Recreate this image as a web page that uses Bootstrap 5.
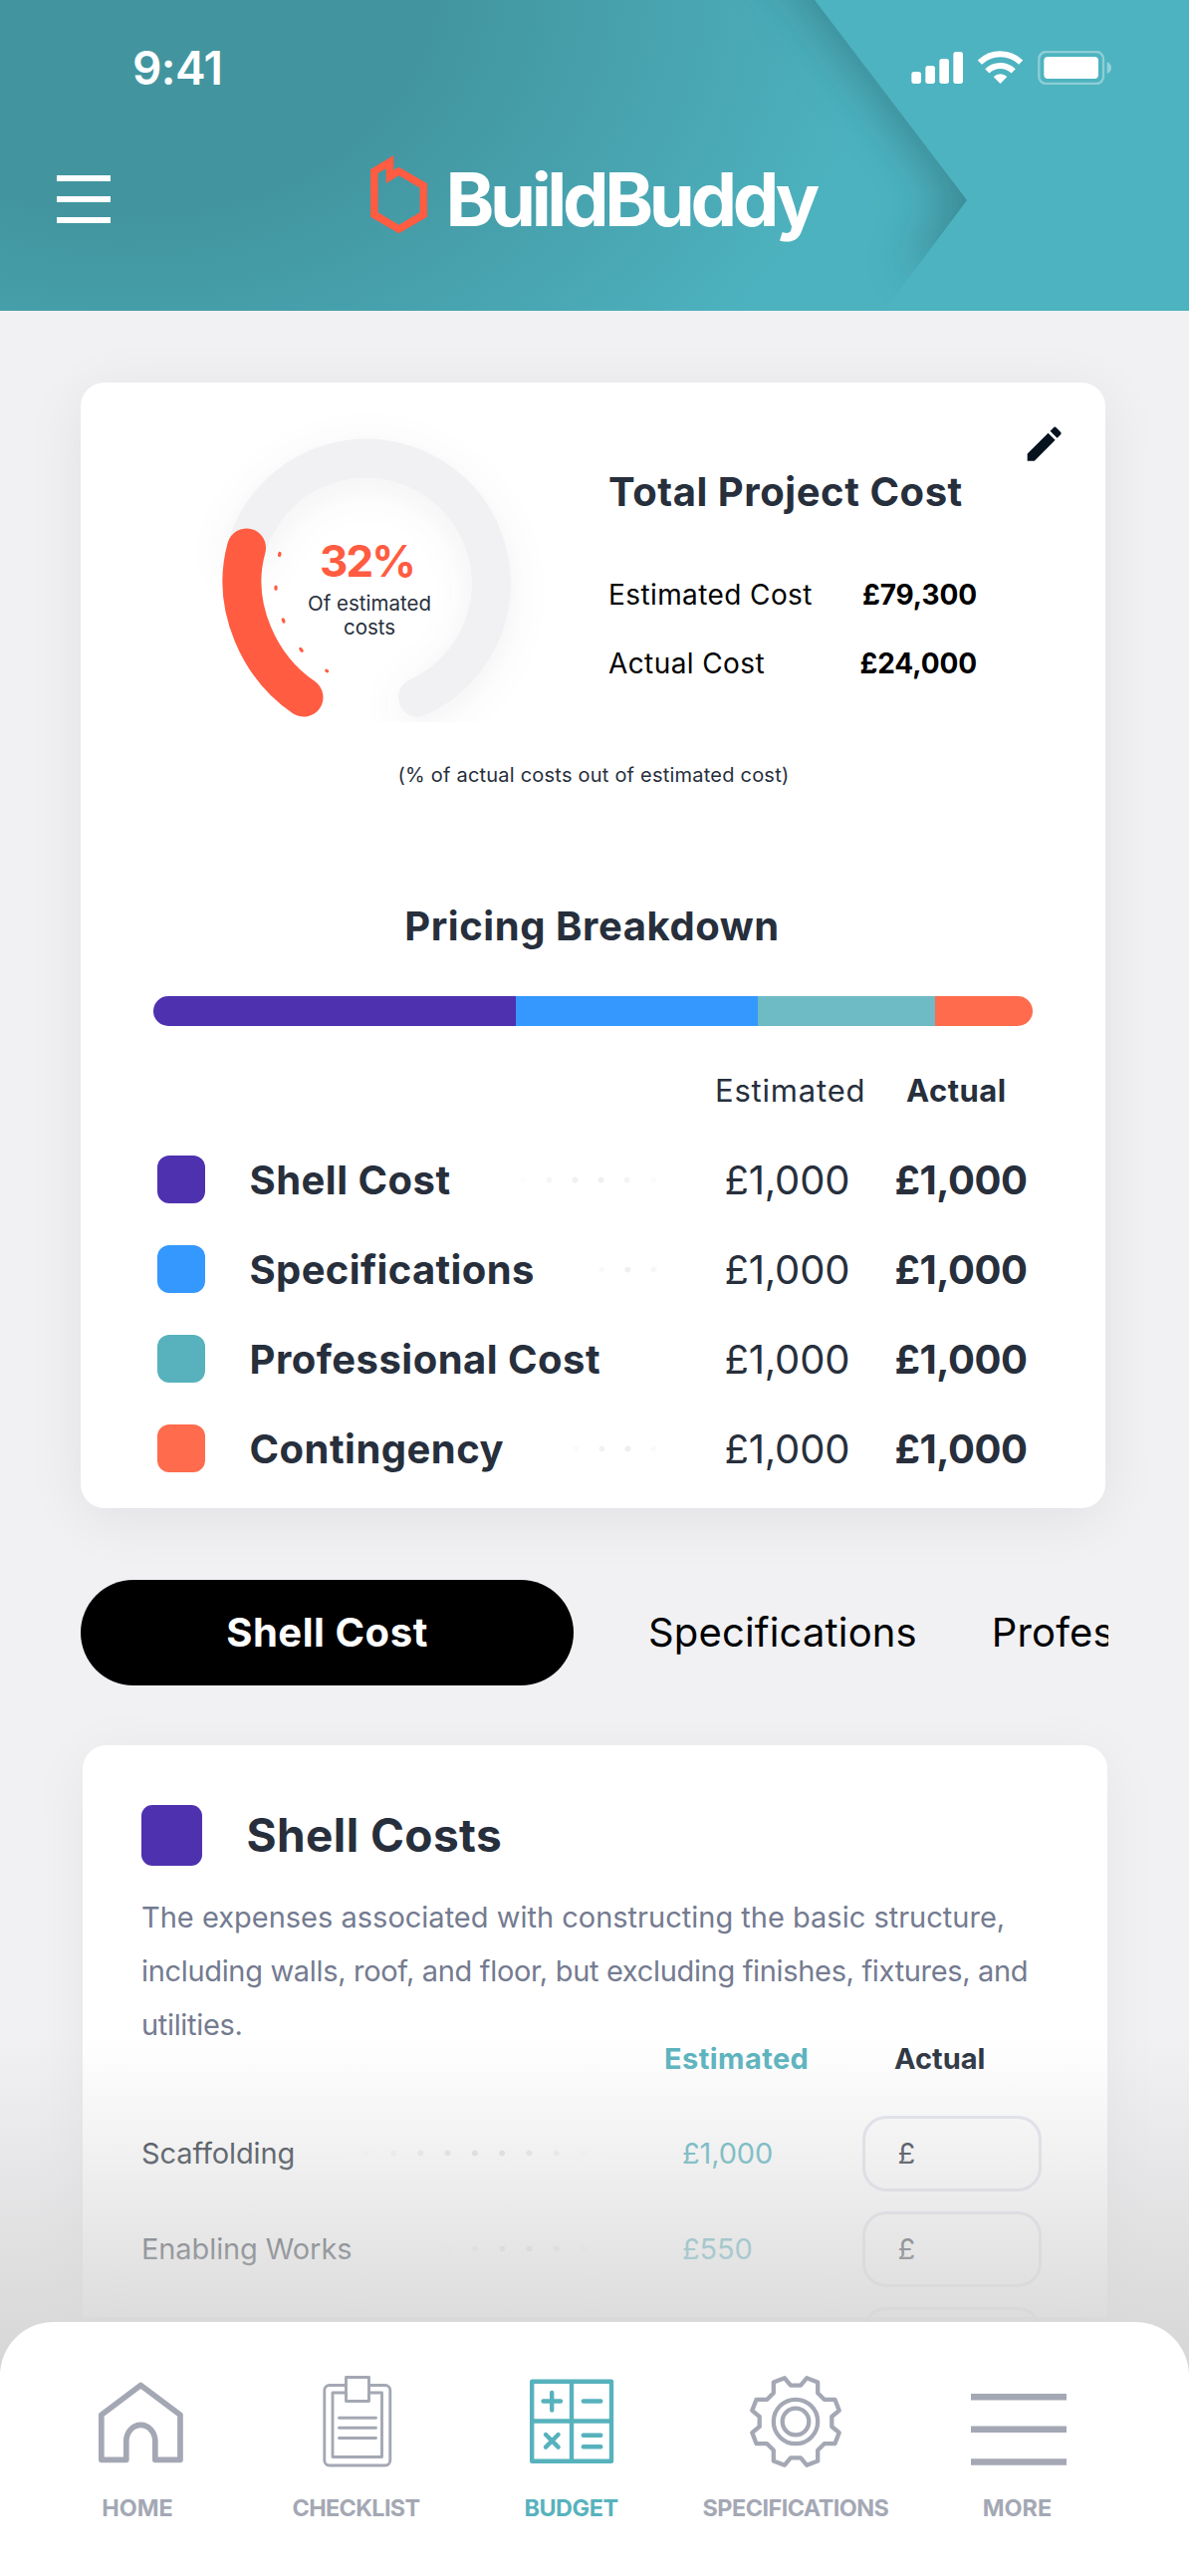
<!DOCTYPE html>
<html lang="en">
<head>
<meta charset="utf-8">
<meta name="viewport" content="width=device-width, initial-scale=1">
<title>BuildBuddy – Budget</title>
<link rel="stylesheet" href="https://cdn.jsdelivr.net/npm/bootstrap@5.3.0/dist/css/bootstrap.min.css">
<style>
  :root { --ink:#272f3c; --teal:#57b2bd; --coral:#ff5c41; --muted:#a4a8b4; }
  body { background:#f1f1f4; font-family:Inter, "Liberation Sans", sans-serif; color:var(--ink); }
  .app { width:1194px; height:2586px; }
  svg { display:block; flex:none; }

  /* header */
  .app-header { height:312px; }
  .header-art { top:0; left:0; z-index:0; }
  .status-bar { height:136px; padding:0 78px 0 133px; }
  .clock { font-size:46px; font-weight:600; letter-spacing:-.6px; line-height:50px; }
  .brand-row { height:128px; padding-left:57px; }
  .brand-logo { margin:-10px 18.5px 0 260.7px; }
  .brand-name { font-size:74px; font-weight:700; letter-spacing:-4.4px; line-height:90px; }

  /* summary card */
  .summary { margin:72px 84px 0 81px; height:1130px; border-radius:24px; box-shadow:0 10px 60px rgba(0,0,0,.07); }
  .edit-btn { top:39px; right:38.5px; color:#07121f; }
  .totals { margin-left:30px; padding-top:85px; width:370px; }
  .h-title { font-size:40px; font-weight:700; line-height:50px; letter-spacing:.56px; }
  .total-line { height:69px; font-size:28px; color:#000; }
  .total-line span { letter-spacing:.4px; }
  .total-line strong { font-weight:700; letter-spacing:-.1px; }
  .caption-note { font-size:20px; line-height:30px; margin-top:38px; padding-left:1px; letter-spacing:.22px; }
  .pricing-title { margin-top:112px; padding-right:2px; }
  .split-bar { height:30px; width:883px; margin:45px 0 0 73px; border-radius:15px; }
  .c-shell { background:#4e31af; } .c-spec { background:#3498fe; }
  .c-prof { background:#57b2bd; } .c-cont { background:#ff6b4d; }
  .split-bar .c-prof { background:#6ebac5; }
  .cost-head { margin:45px 0 24px; padding-left:637px; font-size:31px; line-height:40px; }
  .cost-head > :first-child { width:192px; letter-spacing:.8px; }
  .cost-head > :last-child { letter-spacing:.5px; }
  .cost-row { height:90px; padding-left:76.5px; padding-top:1px; font-size:40px; line-height:50px; }
  .swatch { width:48px; height:48px; border-radius:12px; margin:-1px 45px 0 0; flex:none; }
  .cost-name { width:477px; font-weight:700; letter-spacing:.48px; }
  .cost-est { width:171px; letter-spacing:-.2px; }
  .cost-act { font-weight:700; letter-spacing:-.49px; }
  .leader { height:7px; margin-left:auto; margin-right:58px;
    background:radial-gradient(circle at center, #efeff1 2.6px, transparent 3.3px) 0 0 / 26.2px 7px repeat-x;
    -webkit-mask-image:linear-gradient(90deg, transparent, #000 45%, #000 65%, transparent);
    mask-image:linear-gradient(90deg, transparent, #000 45%, #000 65%, transparent); }
  .n3 { width:78.6px; } .n4 { width:104.8px; } .n6 { width:157.2px; }

  /* tabs */
  .tab-strip { margin:72px 81px 0; height:106px; width:1032px; font-size:40px; line-height:50px; color:#000; }
  .tab-strip > * { flex:none; }
  .tab-active { width:495px; height:106px; border-radius:53px; background:#000; color:#fff; font-weight:700; letter-spacing:.54px; }
  .tab-plain { margin-left:75px; letter-spacing:.15px; }

  /* detail card */
  .detail { margin:59.5px 82.5px 0; height:574px; padding:60px 0 0 59.5px; border-radius:24px 24px 0 0; box-shadow:0 10px 60px rgba(0,0,0,.05); }
  .detail-swatch { width:61px; height:61px; border-radius:11px; margin-right:44.5px; }
  .detail-title { font-size:46px; font-weight:700; letter-spacing:.4px; line-height:60px; }
  .detail-text { font-size:29px; line-height:54px; color:#747b90; width:905px; margin-top:25px; }
  .detail-text span { letter-spacing:-.33px; }
  .item-head { margin:-8px 0 32px; padding-left:525px; font-size:29px; font-weight:700; line-height:30px; }
  .item-head > :first-child { width:231px; color:var(--teal); letter-spacing:.42px; }
  .item-row { height:96px; font-size:29px; line-height:40px; }
  .item-name { width:543px; letter-spacing:-.1px; }
  .item-name .leader { background-image:radial-gradient(circle at center, #e2e3e6 2.6px, transparent 3.3px); background-size:27.3px 7px; margin-right:85px; }
  .item-name .n9 { width:245.7px; } .item-name .n6 { width:163.8px; }
  .item-est { width:180.5px; color:var(--teal); letter-spacing:-.15px; }
  .money-box { width:180px; height:76px; border:3px solid #e3e5ee; border-radius:24px; padding-left:33px; }

  /* bottom */
  .fade-out { left:0; right:0; top:2046px; height:336px; background:linear-gradient(rgba(214,214,214,0), #d6d6d6); }
  .tab-bar { left:0; right:0; bottom:0; height:255px; border-radius:54px 54px 0 0; padding:52px 0 0 33px; color:var(--muted); }
  .tab-item { font-size:23.4px; font-weight:700; line-height:30px; }
  .tab-item div { margin-top:23.5px; }
  .tab-item.active { color:var(--teal); }
</style>
</head>
<body>
<div class="app position-relative overflow-hidden">

  <header class="app-header position-relative text-white">
    <svg class="header-art position-absolute" width="1194" height="312" viewBox="0 0 1194 312">
      <defs>
        <radialGradient id="hg" gradientUnits="userSpaceOnUse" cx="0" cy="0" r="1" gradientTransform="translate(130 -10) scale(760 560)">
          <stop offset=".4" stop-color="#42959f"/><stop offset="1" stop-color="#4db2bf"/>
        </radialGradient>
        <filter id="hs" filterUnits="userSpaceOnUse" x="600" y="-180" width="800" height="580">
          <feGaussianBlur stdDeviation="25"/>
        </filter>
      </defs>
      <rect width="1194" height="312" fill="url(#hg)"/>
      <path d="M753 -75L958 204L910 268H1300V-75Z" fill="#2b6f79" fill-opacity=".62" filter="url(#hs)"/>
      <path d="M818 0L971 201L888 312H1300V0Z" fill="#4db3c0"/>
    </svg>

    <div class="status-bar position-relative d-flex align-items-center justify-content-between">
      <span class="clock">9:41</span>
      <svg width="201" height="34" viewBox="0 0 603 102" fill="#fff">
        <rect x="1" y="63" width="29" height="36" rx="8"/><rect x="43" y="45" width="29" height="54" rx="8"/>
        <rect x="85" y="24" width="29" height="75" rx="8"/><rect x="127" y="3" width="29" height="96" rx="8"/>
        <path d="M206.500 35A89 89 0 0 1 330.500 35M229 61A56 56 0 0 1 308 61" fill="none" stroke="#fff" stroke-width="18"/>
        <path d="M268.500 99L248 78A29 29 0 0 1 289 78Z"/>
        <rect x="385" y="3" width="194" height="96" rx="21" fill="none" stroke="#fff" stroke-opacity=".36" stroke-width="7"/>
        <rect x="400" y="18" width="164" height="66" rx="12"/>
        <path d="M590 33Q603 39 603 51T590 69Z" fill-opacity=".4"/>
      </svg>
    </div>

    <div class="brand-row position-relative d-flex align-items-center">
      <svg width="54" height="48" viewBox="0 0 54 48" fill="#fff"><path d="M0 0h54v6H0zM0 21h54v6H0zM0 42h54v6H0z"/></svg>
      <svg class="brand-logo" width="57.300" height="78.300" viewBox="96 77 172 235"><path fill="#ff5c41" fill-rule="evenodd" d="M96 119L166 77V121L182 112L268 162V262L182 312L96 262ZM119 131V249L182 286L245 249V175L182 138L143 161V117Z"/></svg>
      <span class="brand-name">BuildBuddy</span>
    </div>
  </header>

  <main>
    <section class="summary bg-white position-relative">
      <div class="edit-btn position-absolute"><svg width="45.300" height="45.300" viewBox="0 0 24 24" fill="currentColor"><path d="M3 17.250V21h3.750L17.810 9.940l-3.750-3.750L3 17.250zM20.710 7.040a1 1 0 0 0 0-1.410l-2.340-2.340a1 1 0 0 0-1.410 0l-1.830 1.830 3.750 3.750 1.830-1.830z"/></svg></div>

      <div class="d-flex">
        <svg width="500" height="341" viewBox="81 384 500 341">
          <defs><filter id="gs" filterUnits="userSpaceOnUse" x="81" y="384" width="500" height="400" color-interpolation-filters="sRGB"><feDropShadow dx="0" dy="8" stdDeviation="19" flood-color="#2a2f45" flood-opacity=".065"/></filter></defs>
          <path d="M247.500 550A125.500 125.500 0 1 1 419.500 700" fill="none" stroke="#f1f1f4" stroke-width="39" stroke-linecap="round" filter="url(#gs)"/>
          <path d="M247.500 550C231 610 262 671 305 700" fill="none" stroke="#ff5c41" stroke-width="39" stroke-linecap="round"/>
          <g stroke="#ff5c41" stroke-width="3.200" stroke-linecap="round">
            <path d="M281 555.500l-.5 2M277 589v2.200M284.200 622l.8 2M301.800 651.500l1.400 1.700M327.800 673.200l.8 .6"/>
          </g>
          <g text-anchor="middle" font-family="Inter, sans-serif">
            <text x="368.500" y="579" font-size="44" font-weight="700" letter-spacing="-2" fill="#ff5c41">32%</text>
            <text x="371" y="613" font-size="20.500" fill="#272f3c">Of estimated</text>
            <text x="371" y="637" font-size="20.500" fill="#272f3c">costs</text>
          </g>
        </svg>
        <div class="totals">
          <div class="h-title mb-0">Total Project Cost</div>
          <div class="total-line d-flex align-items-center justify-content-between" style="margin-top:43px"><span>Estimated Cost</span><strong>£79,300</strong></div>
          <div class="total-line d-flex align-items-center justify-content-between"><span>Actual Cost</span><strong>£24,000</strong></div>
        </div>
      </div>

      <p class="caption-note text-center mb-0">(% of actual costs out of estimated cost)</p>

      <div class="h-title pricing-title text-center">Pricing Breakdown</div>
      <div class="split-bar d-flex overflow-hidden">
        <div class="c-shell" style="width:41.2%"></div><div class="c-spec" style="width:27.6%"></div>
        <div class="c-prof" style="width:20.15%"></div><div class="c-cont flex-fill"></div>
      </div>

      <div class="cost-head d-flex"><span>Estimated</span><strong>Actual</strong></div>
      <div class="cost-row d-flex align-items-center"><i class="swatch c-shell"></i><div class="cost-name d-flex align-items-center">Shell Cost<i class="leader n6"></i></div><span class="cost-est">£1,000</span><span class="cost-act">£1,000</span></div>
      <div class="cost-row d-flex align-items-center"><i class="swatch c-spec"></i><div class="cost-name d-flex align-items-center"><span style="letter-spacing:.36px">Specifications</span><i class="leader n3"></i></div><span class="cost-est">£1,000</span><span class="cost-act">£1,000</span></div>
      <div class="cost-row d-flex align-items-center"><i class="swatch c-prof"></i><div class="cost-name">Professional Cost</div><span class="cost-est">£1,000</span><span class="cost-act">£1,000</span></div>
      <div class="cost-row d-flex align-items-center"><i class="swatch c-cont"></i><div class="cost-name d-flex align-items-center">Contingency<i class="leader n4"></i></div><span class="cost-est">£1,000</span><span class="cost-act">£1,000</span></div>
    </section>

    <nav class="tab-strip d-flex align-items-center overflow-hidden text-nowrap">
      <span class="tab-active d-flex align-items-center justify-content-center">Shell Cost</span>
      <span class="tab-plain">Specifications</span>
      <span class="tab-plain">Professional Cost</span>
    </nav>

    <section class="detail bg-white">
      <div class="d-flex align-items-center"><i class="detail-swatch c-shell"></i><div class="detail-title">Shell Costs</div></div>
      <p class="detail-text mb-0">The expenses associated with constructing the basic structure, <span>including walls, roof, and floor, but excluding finishes, fixtures, and utilities.</span></p>
      <div class="item-head d-flex"><span>Estimated</span><span>Actual</span></div>
      <div class="item-row d-flex align-items-center"><div class="item-name d-flex align-items-center">Scaffolding<i class="leader n9"></i></div><span class="item-est">£1,000</span><div class="money-box d-flex align-items-center">£</div></div>
      <div class="item-row d-flex align-items-center"><div class="item-name d-flex align-items-center">Enabling Works<i class="leader n6"></i></div><span class="item-est">£550</span><div class="money-box d-flex align-items-center">£</div></div>
      <div class="item-row d-flex align-items-center"><div class="item-name"></div><span class="item-est"></span><div class="money-box"></div></div>
    </section>
  </main>

  <div class="fade-out position-absolute"></div>

  <nav class="tab-bar position-absolute bg-white d-flex align-items-start">
    <div class="tab-item text-center" style="width:216px"><svg class="mx-auto" width="96" height="96" viewBox="-48 -48 96 96" fill="none" stroke="currentColor" stroke-width="5.700" stroke-linejoin="round"><path d="M-39.200 38.300V-6.800L.3 -36.500L40 -6.800V38.300H14.800V19.500A14.400 16 0 0 0 -14.200 19.500V38.300Z"/></svg><div style="padding-right:6px">HOME</div></div>
    <div class="tab-item text-center" style="width:217px;letter-spacing:-.65px"><svg class="mx-auto" width="96" height="96" viewBox="-48 -48 96 96" fill="none" stroke="currentColor" stroke-width="2.900" stroke-linejoin="round"><rect x="-32.200" y="-36.500" width="66" height="80.500" rx="5"/><rect x="-24" y="-29" width="49.500" height="64.500"/><path d="M-17.500 -3.700h37M-17.500 6.300h37M-17.500 16.500h37" stroke-linecap="round"/><rect x="-10.500" y="-44.500" width="23" height="24" fill="#fff"/></svg><div>CHECKLIST</div></div>
    <div class="tab-item text-center active" style="width:215px;letter-spacing:-.45px"><svg class="mx-auto" width="96" height="96" viewBox="-48 -48 96 96" fill="none" stroke="currentColor" stroke-width="4.400" stroke-linejoin="round"><path d="M-39.800 -40.300H40V39.800H-39.800ZM0 -40V40M-40 -.5H40"/><path stroke-linecap="round" d="M-28.500 -20.500h17.500M-19.800 -29v17.500M11.800 -20.500h17.500M-26 13l12.600 12.600M-13.400 13l-12.600 12.600M11.800 13.800h17.500M11.800 25.200h17.500"/></svg><div>BUDGET</div></div>
    <div class="tab-item text-center" style="width:236px;letter-spacing:-.53px"><svg class="mx-auto" width="96" height="96" viewBox="-48 -48 96 96" fill="none" stroke="currentColor" stroke-width="4.300" stroke-linejoin="round"><path d="M-5 -36.300H5L11.100 -43.700L22.200 -39.400V-28.700L28.700 -22.200H39.400L43.700 -11.100L36.300 -5V5L43.700 11.100L39.400 22.200H28.700L22.200 28.700V39.400L11.100 43.700L5 36.300H-5L-11.100 43.700L-22.200 39.400V28.700L-28.700 22.200H-39.400L-43.700 11.100L-36.300 5V-5L-43.700 -11.100L-39.400 -22.200H-28.700L-22.200 -28.700V-39.400L-11.100 -43.700Z"/><circle r="22.200"/><circle r="13.300"/></svg><div>SPECIFICATIONS</div></div>
    <div class="tab-item text-center" style="width:211px"><svg class="mx-auto" width="96" height="96" viewBox="0 0 96 96" fill="currentColor"><path d="M0 20h96v6.500H0zM0 52.500h96v6.500H0zM0 85.300h96v6.500H0z"/></svg><div style="padding-right:2px">MORE</div></div>
  </nav>
</div>
<script src="https://cdn.jsdelivr.net/npm/bootstrap@5.3.0/dist/js/bootstrap.bundle.min.js"></script>
</body>
</html>
